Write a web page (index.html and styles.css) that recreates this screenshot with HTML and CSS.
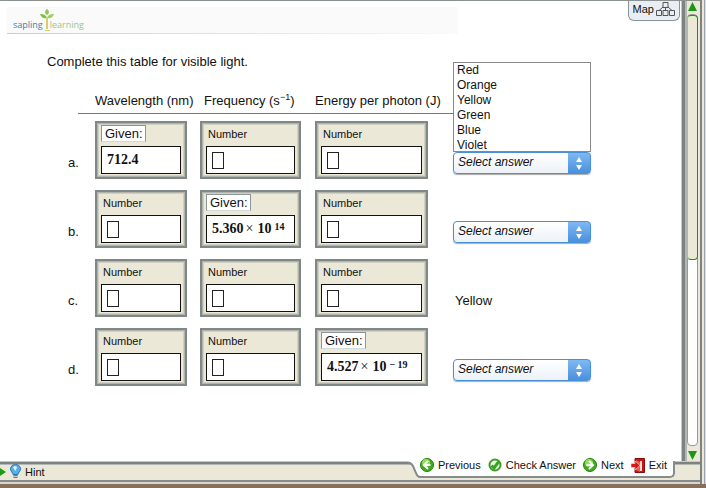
FILE: index.html
```html
<!DOCTYPE html>
<html lang="en">
<head>
    <meta charset="UTF-8">
    <meta name="viewport" content="width=device-width, initial-scale=1.0">
    <title>Sapling Learning</title>
    <link rel="stylesheet" href="styles.css">
</head>
<body>
<main class="page">
    <header class="top">
        <div class="banner">
            <a class="logo" href="#" aria-label="sapling learning">
                <span class="sap">sapling</span>
                <svg class="tree" viewBox="0 0 14 22" width="14" height="22" aria-hidden="true">
                    <path d="M7 0C10 2 9 5 7 6C5 5 4 2 7 0Z" fill="#8cc850"/>
                    <path d="M0 5C4 5 6 6 7 9C3 10 1 8 0 5Z" fill="#7cc04a"/>
                    <path d="M14 5C10 5 8 6 7 9C11 10 13 8 14 5Z" fill="#a0d060"/>
                    <path d="M7 8V20" stroke="#d8cc6c" stroke-width="2"/>
                    <path d="M5 21.500H10" stroke="#d8cc6c"/>
                </svg>
                <span class="learn">learning</span>
            </a>
        </div>
        <button class="map" type="button">Map
            <svg viewBox="0 0 19 14" width="19" height="14" fill="none" stroke="#555" aria-hidden="true">
                <path d="M7 .5H12V5.500H7ZM.5 8.500H5.500V13.500H.5ZM7 8.500H12V13.500H7ZM13.500 8.500H18.500V13.500H13.500Z"/>
                <path d="M7 5L3 8.500M9.500 5.500V8.500M12 5L16 8.500"/>
            </svg>
        </button>
    </header>

    <section class="question">
        <p>Complete this table for visible light.</p>
        <table>
            <colgroup>
                <col class="c-letter"><col class="c-wave"><col class="c-freq"><col class="c-energy"><col class="c-color">
            </colgroup>
            <thead>
                <tr>
                    <td class="rule"></td>
                    <th>Wavelength (nm)</th>
                    <th>Frequency (s<sup>−1</sup>)</th>
                    <th>Energy per photon (J)</th>
                    <td></td>
                </tr>
            </thead>
            <tbody>
                <tr>
                    <td class="letter">a.</td>
                    <td><div class="box"><span class="given">Given:</span><div class="field value">712.4</div></div></td>
                    <td><div class="box"><label for="fa">Number</label><div class="field"><input id="fa" type="text"></div></div></td>
                    <td><div class="box"><label for="ea">Number</label><div class="field"><input id="ea" type="text"></div></div></td>
                    <td class="answer">
                        <div class="dropdown">
                            <select class="options" size="6" aria-label="Color options">
                                <option>Red</option>
                                <option>Orange</option>
                                <option>Yellow</option>
                                <option>Green</option>
                                <option>Blue</option>
                                <option>Violet</option>
                            </select>
                            <select class="pick" aria-label="Color for a"><option>Select answer</option></select>
                        </div>
                    </td>
                </tr>
                <tr>
                    <td class="letter">b.</td>
                    <td><div class="box"><label for="wb">Number</label><div class="field"><input id="wb" type="text"></div></div></td>
                    <td><div class="box"><span class="given">Given:</span><div class="field value">5.360<i>×</i>10<sup>14</sup></div></div></td>
                    <td><div class="box"><label for="eb">Number</label><div class="field"><input id="eb" type="text"></div></div></td>
                    <td class="answer"><div class="dropdown"><select class="pick" aria-label="Color for b"><option>Select answer</option></select></div></td>
                </tr>
                <tr>
                    <td class="letter">c.</td>
                    <td><div class="box"><label for="wc">Number</label><div class="field"><input id="wc" type="text"></div></div></td>
                    <td><div class="box"><label for="fc">Number</label><div class="field"><input id="fc" type="text"></div></div></td>
                    <td><div class="box"><label for="ec">Number</label><div class="field"><input id="ec" type="text"></div></div></td>
                    <td class="answer fixed">Yellow</td>
                </tr>
                <tr>
                    <td class="letter">d.</td>
                    <td><div class="box"><label for="wd">Number</label><div class="field"><input id="wd" type="text"></div></div></td>
                    <td><div class="box"><label for="fd">Number</label><div class="field"><input id="fd" type="text"></div></div></td>
                    <td><div class="box"><span class="given">Given:</span><div class="field value">4.527<i>×</i>10<sup>− 19</sup></div></div></td>
                    <td class="answer"><div class="dropdown"><select class="pick" aria-label="Color for d"><option>Select answer</option></select></div></td>
                </tr>
            </tbody>
        </table>
    </section>
</main>

<aside class="scroll">
    <button type="button" aria-label="Scroll up">
        <svg viewBox="0 0 9 9" width="9" height="9"><path d="M4.500 0L9 9H0Z" fill="#1c9614"/></svg>
    </button>
    <div class="track"><div class="thumb"></div></div>
    <button type="button" aria-label="Scroll down">
        <svg viewBox="0 0 9 9" width="9" height="9"><path d="M4.500 9L9 0H0Z" fill="#1c9614"/></svg>
    </button>
</aside>
<div class="edge"></div>

<footer class="bottom">
    <button class="hint" type="button">
        <svg viewBox="0 0 6 10" width="6" height="10" aria-hidden="true"><path d="M0 1L6 5L0 9Z" fill="#1c9c10"/></svg>
        <svg viewBox="0 0 11 15" width="11" height="15" aria-hidden="true">
            <path d="M5.500 .5C2.500 .5 .5 2.500 .5 5C.5 7.500 3 8.500 3 10.500H8C8 8.500 10.500 7.500 10.500 5C10.500 2.500 8.500 .5 5.500 .5Z" fill="#58aee8" stroke="#2a78b8"/>
            <path d="M3 3.500C4 2 6 2 7 3L5.500 7Z" fill="#e4f6ff"/>
            <path d="M3.500 11H7.500V14H3.500Z" fill="#777"/>
            <path d="M3.500 12.500H7.500" stroke="#ccc"/>
        </svg>
        Hint
    </button>
    <svg class="slant" viewBox="0 0 12 17" width="12" height="17" aria-hidden="true">
        <path d="M0 0H12V16C10 16 9 14 8 12L5 4C4 2 3 1 0 0Z" fill="#fff"/>
        <path d="M0 2C3 2 4 3 5 5L8 12C9 15 10 16 12 16" fill="none" stroke="#868c8b" stroke-width="2"/>
    </svg>
    <nav>
        <button type="button">
            <svg viewBox="0 0 14 14" width="14" height="14" aria-hidden="true">
                <circle cx="7" cy="7" r="6.500" fill="#3fae1c" stroke="#277c12"/>
                <circle cx="6" cy="5" r="4" fill="#8fdc58"/>
                <path d="M8 3L4 7L8 11M4.500 7H10.500" fill="none" stroke="#fff" stroke-width="2"/>
            </svg>
            Previous
        </button>
        <button type="button">
            <svg viewBox="0 0 14 14" width="14" height="14" aria-hidden="true">
                <circle cx="7" cy="7" r="5.500" fill="#f2fbea" stroke="#38a022" stroke-width="2"/>
                <path d="M3.500 7.500L6 10L10.500 4" fill="none" stroke="#38a022" stroke-width="3"/>
            </svg>
            Check Answer
        </button>
        <button type="button">
            <svg viewBox="0 0 14 14" width="14" height="14" aria-hidden="true">
                <circle cx="7" cy="7" r="6.500" fill="#3fae1c" stroke="#277c12"/>
                <circle cx="6" cy="5" r="4" fill="#8fdc58"/>
                <path d="M6 3L10 7L6 11M3.500 7H9.500" fill="none" stroke="#fff" stroke-width="2"/>
            </svg>
            Next
        </button>
        <button type="button">
            <svg viewBox="0 0 14 15" width="14" height="15" aria-hidden="true">
                <path d="M4 .5H13.500V14.500H4Z" fill="#c41414" stroke="#8c0c0c"/>
                <path d="M5 2L9 4V14L5 12Z" fill="#ee5a4a"/>
                <path d="M9 3H11V13H9Z" fill="#f4dcd8"/>
                <path d="M0 5.500H4V3L9 7.500L4 12V9.500H0Z" fill="#d81818" stroke="#fff" stroke-width=".5"/>
            </svg>
            Exit
        </button>
    </nav>
</footer>
<div class="desk"></div>
</body>
</html>
```

FILE: styles.css
```css
* {
    margin: 0;
    padding: 0;
    box-sizing: border-box;
}
body {
    display: grid;
    grid-template-columns: 1fr 19px 6px;
    grid-template-rows: 1fr 23px 4px;
    min-height: 100vh;
    font-family: "Liberation Sans", Arial, sans-serif;
    font-size: 13px;
    color: #111;
    background-color: #fff;
}
button {
    border: none;
    background: none;
    font: inherit;
    color: inherit;
    cursor: pointer;
}
.page {
    border-top: 1px solid #8a918e;
}

/* header */
.top {
    display: flex;
    justify-content: space-between;
    align-items: flex-start;
    padding: 0 1px 0 7px;
}
.banner {
    flex: 0 1 451px;
    height: 27px;
    margin-top: 6px;
    padding: 2px 6px;
    background-color: #fafafa;
    border-bottom: 1px solid;
    border-image: linear-gradient(to right, #ccc, #fafafa) 1;
}
.logo {
    display: flex;
    align-items: flex-start;
    font-family: "Open Sans", sans-serif;
    font-size: 9px;
    line-height: 12px;
    text-decoration: none;
}
.logo span {
    margin-top: 10px;
}
.tree {
    margin: 0 -4px 0 -3px;
}
.sap {
    color: #2f87aa;
}
.learn {
    color: #a0c488;
}
.map {
    display: flex;
    align-items: center;
    gap: 2px;
    height: 20px;
    padding: 0 4px 4px;
    font-size: 11px;
    background-color: #e9eef5;
    border: 1px solid #8c9498;
    border-top: none;
    border-radius: 0 0 6px 6px;
}

/* question */
.question {
    padding: 20px 0 10px 47px;
}
.question p {
    line-height: 16px;
}
table {
    width: 525px;
    margin: 19px 0 0 19px;
    table-layout: fixed;
    border-collapse: collapse;
}
.c-letter { width: 29px; }
.c-wave { width: 105px; }
.c-freq { width: 115px; }
.c-energy { width: 138px; }
th {
    font-weight: normal;
    text-align: left;
    white-space: nowrap;
    line-height: 24px;
}
th:nth-child(3) { padding-left: 4px; }
th::after, .rule::after {
    content: "";
    display: block;
    height: 1px;
    background-color: #777;
}
th:nth-child(3)::after { margin-left: -4px; }
.rule {
    vertical-align: bottom;
}
.rule::after { margin-left: 12px; }
sup {
    font-size: 9px;
    line-height: 0;
}
tbody td {
    height: 69px;
    padding-top: 7px;
    vertical-align: top;
}
.box {
    height: 58px;
    padding: 2px 4px 4px;
    background-color: #ebe8d8;
    border: 2px solid #808887;
    box-shadow: inset 0 0 0 1px #b0b4aa, inset 0 0 0 2px #cfcfc2;
}
td:nth-child(2) .box { width: 92px; }
td:nth-child(3) .box { width: 101px; }
td:nth-child(4) .box { width: 113px; }
.box label {
    display: block;
    height: 21px;
    padding: 1px 2px 0;
    font-size: 11px;
    line-height: 16px;
}
.given {
    display: block;
    width: 45px;
    height: 17px;
    margin-bottom: 4px;
    padding-left: 3px;
    line-height: 15px;
    background-color: #fff;
    border: 1px solid #8c9698;
    border-bottom-color: #d0dadc;
}
.field {
    display: flex;
    align-items: center;
    height: 28px;
    padding-left: 5px;
    background-color: #fff;
    border: 1px solid #111;
}
.field input {
    width: 12px;
    height: 17px;
    border: 1px solid #222;
    outline: none;
}
.value {
    font-family: "Liberation Serif", "Times New Roman", serif;
    font-size: 14px;
    font-weight: bold;
}
.value i {
    margin: 0 4px 0 2px;
    font-style: normal;
    font-weight: normal;
}
.value sup {
    align-self: flex-start;
    margin: 6px 0 0 3px;
    font-size: 10px;
    line-height: 9px;
}
tbody .letter {
    padding: 40px 0 0 2px;
    line-height: 18px;
}
tbody .answer {
    padding-top: 38px;
}
tbody .fixed {
    padding: 40px 0 0 2px;
    line-height: 18px;
}
.dropdown {
    position: relative;
}
.pick {
    appearance: none;
    display: block;
    width: 100%;
    height: 22px;
    padding: 0 26px 3px 4px;
    font: italic 12px "Liberation Sans", Arial, sans-serif;
    color: #111;
    border: 1px solid #4a90d6;
    border-radius: 4px;
    background:
        url("data:image/svg+xml,%3Csvg xmlns='http://www.w3.org/2000/svg' width='22' height='20'%3E%3Cpath d='M11 4l3 5H8zM11 17l3-5H8z' fill='white'/%3E%3C/svg%3E") right center no-repeat,
        linear-gradient(#7fb8f4, #4a90dc) right / 22px 100% no-repeat,
        linear-gradient(#fff, #ecf2f8);
    box-shadow: 0 1px 1px #aaa;
}
.options {
    appearance: none;
    position: absolute;
    bottom: 100%;
    left: 0;
    width: 100%;
    height: 90px;
    overflow: hidden;
    font: 12px "Liberation Sans", Arial, sans-serif;
    color: #111;
    background-color: #fff;
    border: 1px solid #888;
    border-radius: 0;
    outline: none;
}
.options option {
    min-height: 15px;
    height: 15px;
    padding: 0 3px;
    line-height: 15px;
}

/* window frame */
.scroll {
    display: flex;
    flex-direction: column;
    align-items: center;
    padding: 1px 2px 1px 6px;
    background: linear-gradient(to right, #c4c8c8 1px, #7c8382 1px 4px, #b4b8b4 4px 6px, #ebe8d8 6px);
    border-top: 1px solid #8a918e;
}
.scroll button, .scroll svg {
    display: block;
}
.track {
    flex: 1;
    width: 11px;
    margin: 3px 0 5px;
    background-color: #fff;
    border: 1px solid #999;
    border-radius: 4px;
}
.thumb {
    height: 57%;
    margin: 0 -1px;
    background-color: #ebe8d8;
    border: 1px solid #1c8c1c;
    border-left-color: #8cdc50;
    border-radius: 4px;
}
.edge {
    grid-column: 3;
    grid-row: 1 / 3;
    background: linear-gradient(to right, #7c8382 2px, #ebe8d8 2px 4px, #9aa4b4 4px 5px, #dcdcd4 5px);
}
.bottom {
    grid-column: 1 / 3;
    grid-row: 2;
    display: flex;
    align-items: flex-start;
    background: linear-gradient(#c4c8c8 1px, #7c8382 1px 3px, #b4b8b4 3px 4px, #ebe8d8 4px 19px, #868c8b 19px 21px, #d8d6cc 21px);
}
.hint {
    display: flex;
    align-items: center;
    gap: 4px;
    margin-right: auto;
    padding-top: 3px;
    font-size: 11px;
}
.bottom nav {
    display: flex;
    gap: 7px;
    height: 17px;
    margin-right: 25px;
    padding-right: 6px;
    background-color: #fff;
    border-right: 2px solid #868c8b;
    border-bottom: 2px solid #868c8b;
    border-radius: 0 0 5px 0;
}
.bottom nav button {
    display: flex;
    align-items: center;
    gap: 4px;
    height: 8px;
    font-size: 11px;
}
.bottom nav svg {
    flex: none;
}
.desk {
    grid-column: 1 / 4;
    background-color: #84705c;
}
```
